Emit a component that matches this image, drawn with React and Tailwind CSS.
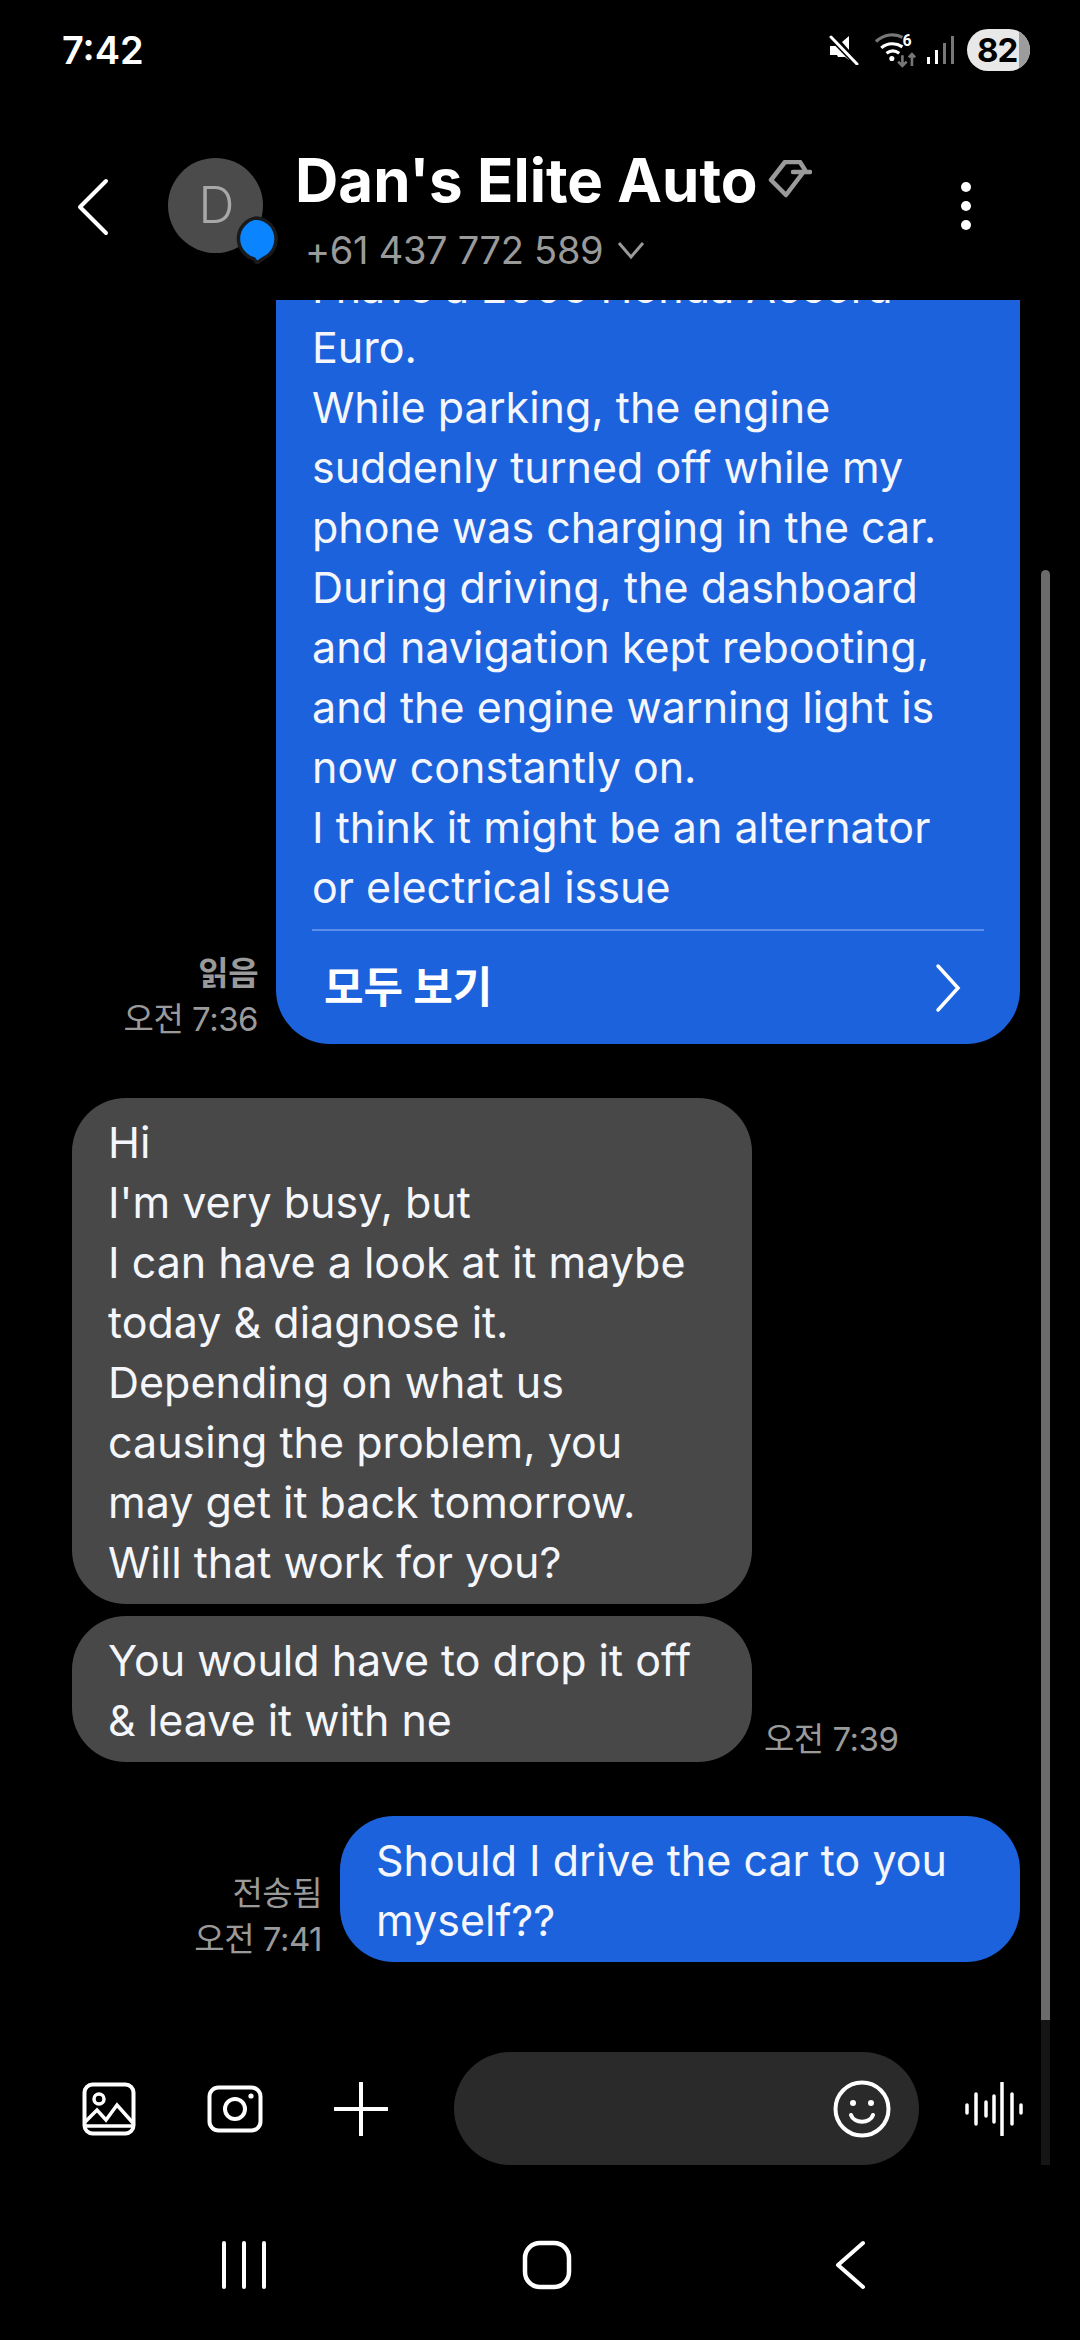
import React from "react";

const FONT = "font-['Inter','Noto_Sans_CJK_KR',sans-serif]";

function Lines({ lines }) {
  return (
    <div className="text-[43px] leading-[60px] text-[#f4f6fb] whitespace-nowrap">
      {lines.map((l) => (
        <div key={l}>{l}</div>
      ))}
    </div>
  );
}

function Meta({ status, time, boldStatus }) {
  return (
    <div className="flex flex-col items-end text-[33px] text-[#9a9a9a] whitespace-nowrap tracking-[-0.5px]">
      {status && <div className={`leading-[46px] ${boldStatus ? "font-bold" : ""}`}>{status}</div>}
      <div className="leading-[46px]">{time}</div>
    </div>
  );
}

function StatusBar() {
  return (
    <div className="h-[100px] flex items-center justify-between pl-[62px] pr-[50px] shrink-0">
      <div className="text-[38px] font-semibold text-white">7:42</div>
      <div className="flex items-center">
        <svg width="30" height="30" viewBox="0 0 30 30" className="mr-[14px]">
          <path d="M1 11h7l3-2 9 13v3l-4-3H9l-1-2H1z" fill="#fff" />
          <path d="M13 7l7-6v14z" fill="#fff" />
          <path d="M2 2l26 27" stroke="#000" strokeWidth="6" />
          <path d="M2 2l26 27" stroke="#fff" strokeWidth="3" strokeLinecap="round" />
        </svg>
        <svg width="44" height="36" viewBox="0 0 40 34" className="mr-[9px]">
          <path d="M2 9C10 2 20 1 27 5" fill="none" stroke="#777" strokeWidth="3" />
          <path d="M7 15c6-5 14-5 20-1" fill="none" stroke="#fff" strokeWidth="3" />
          <path d="M12 20c4-3 8-3 12 0" fill="none" stroke="#fff" strokeWidth="3" />
          <circle cx="17" cy="25" r="2.4" fill="#fff" />
          <path d="M27 22v10m-4-4l4 4 4-4" fill="none" stroke="#777" strokeWidth="2.5" />
          <path d="M36 32V21m-3 3l3-3 3 3" fill="none" stroke="#777" strokeWidth="2.5" />
          <text x="27" y="13" fontSize="15" fontWeight="700" fill="#fff" fontFamily="Roboto">6</text>
        </svg>
        <svg width="30" height="30" viewBox="0 0 30 30" className="mr-[11px]">
          <rect x="1" y="22" width="3" height="7" fill="#fff" />
          <rect x="9" y="15" width="3" height="14" fill="#fff" />
          <rect x="17" y="8" width="3" height="21" fill="#777" />
          <rect x="25" y="1" width="3" height="28" fill="#777" />
        </svg>
        <div className="relative w-[63px] h-[42px] rounded-[21px] overflow-hidden bg-[#e8e8e8] flex items-center pl-[10px]">
          <span className="text-[33px] leading-none font-bold text-black tracking-[-1px]">82</span>
          <div className="absolute top-0 bottom-0 right-0 w-[11px] bg-[#9c9c9c]" />
        </div>
      </div>
    </div>
  );
}

function Header() {
  return (
    <div className="h-[200px] shrink-0 flex items-start relative">
      <svg width="34" height="58" viewBox="0 0 34 58" className="ml-[76px] mt-[78px] shrink-0">
        <path d="M30 3L4 29l26 26" fill="none" stroke="#fff" strokeWidth="4" strokeLinecap="round" strokeLinejoin="round" />
      </svg>
      <div className="relative ml-[58px] mt-[58px] w-[95px] h-[95px] rounded-full bg-[#4b4b4b] flex items-center justify-center shrink-0">
        <span className="text-[50px] font-light text-[#a8a8a8] ml-[2px]">D</span>
        <svg width="46" height="48" viewBox="0 0 46 48" className="absolute left-[65px] top-[58px]">
          <path d="M23 2a21 21 0 0 1 8 40l-7 5-3-4A21 21 0 0 1 23 2z" fill="#0a84ff" stroke="#1a1a1a" strokeWidth="3.5" />
        </svg>
      </div>
      <div className="ml-[32px] mt-[44px] flex flex-col">
        <div className="flex items-center">
          <span className="text-[60px] leading-[72px] font-bold text-white whitespace-nowrap">Dan's Elite Auto</span>
          <svg width="44" height="40" viewBox="0 0 44 40" className="ml-[10px]">
            <path d="M17 2h15l5 8-19 25L3 20z" fill="none" stroke="#9a9a9a" strokeWidth="4.5" strokeLinejoin="round" />
            <path d="M25 12h17" stroke="#9a9a9a" strokeWidth="4.5" strokeLinecap="round" />
          </svg>
        </div>
        <div className="flex items-center ml-[10px] mt-[11px]">
          <span className="text-[38px] leading-[46px] text-[#9a9a9a] whitespace-nowrap tracking-[-0.3px]">+61 437 772 589</span>
          <svg width="28" height="20" viewBox="0 0 28 20" className="ml-[14px]">
            <path d="M2 3l12 14L26 3" fill="none" stroke="#9a9a9a" strokeWidth="3" />
          </svg>
        </div>
      </div>
      <div className="absolute left-[961px] top-[82px] flex flex-col gap-[9px]">
        <div className="w-[10px] h-[10px] rounded-full bg-white" />
        <div className="w-[10px] h-[10px] rounded-full bg-white" />
        <div className="w-[10px] h-[10px] rounded-full bg-white" />
      </div>
    </div>
  );
}

function Messages() {
  return (
    <div className="relative flex-1 min-h-0 overflow-hidden flex flex-col justify-end pb-[58px]">
      <div className="flex justify-end items-end pr-[60px]">
        <div className="mb-[2px] mr-[18px]">
          <Meta status="읽음" time="오전 7:36" boldStatus />
        </div>
        <div className="w-[744px] bg-[#1c62dc] rounded-b-[54px] shrink-0">
          <div className="pl-[36px] pt-[13px]">
            <Lines
              lines={[
                "I have a 2006 Honda Accord",
                "Euro.",
                "While parking, the engine",
                "suddenly turned off while my",
                "phone was charging in the car.",
                "During driving, the dashboard",
                "and navigation kept rebooting,",
                "and the engine warning light is",
                "now constantly on.",
                "I think it might be an alternator",
                "or electrical issue",
              ]}
            />
          </div>
          <div className="mx-[36px] mt-[12px] h-[2px] bg-[#5c8eea]" />
          <div className="h-[113px] flex items-center justify-between pl-[48px] pr-[58px]">
            <span className="text-[43px] font-bold text-white whitespace-nowrap">모두 보기</span>
            <svg width="28" height="50" viewBox="0 0 28 50">
              <path d="M4 3l20 22L4 47" fill="none" stroke="#fff" strokeWidth="3.5" strokeLinecap="round" />
            </svg>
          </div>
        </div>
      </div>

      <div className="mt-[54px] pl-[72px] flex flex-col gap-[12px]">
        <div className="w-[680px] bg-[#484848] rounded-[54px] pl-[36px] pt-[14px] pb-[12px]">
          <Lines
            lines={[
              "Hi",
              "I'm very busy, but",
              "I can have a look at it maybe",
              "today & diagnose it.",
              "Depending on what us",
              "causing the problem, you",
              "may get it back tomorrow.",
              "Will that work for you?",
            ]}
          />
        </div>
        <div className="flex items-end">
          <div className="w-[680px] bg-[#484848] rounded-[54px] pl-[36px] pt-[14px] pb-[12px]">
            <Lines lines={["You would have to drop it off", "& leave it with ne"]} />
          </div>
          <div className="ml-[12px] mb-[0px]">
            <Meta time="오전 7:39" />
          </div>
        </div>
      </div>

      <div className="mt-[54px] flex justify-end items-end pr-[60px]">
        <div className="mb-[0px] mr-[18px]">
          <Meta status="전송됨" time="오전 7:41" />
        </div>
        <div className="w-[680px] bg-[#1c62dc] rounded-[54px] pl-[36px] pt-[14px] pb-[12px] shrink-0">
          <Lines lines={["Should I drive the car to you", "myself??"]} />
        </div>
      </div>

      <div className="absolute left-[1041px] top-[270px] w-[9px] bottom-0 bg-[#6b6b6b] rounded-t-full" />
    </div>
  );
}

function InputBar() {
  return (
    <div className="h-[145px] shrink-0 relative flex items-start pt-[32px]">
      <svg width="54" height="54" viewBox="0 0 54 54" className="ml-[82px] mt-[30px] shrink-0">
        <rect x="2.5" y="2.5" width="49" height="49" rx="8" fill="none" stroke="#fff" strokeWidth="4" />
        <circle cx="17" cy="17" r="5" fill="none" stroke="#fff" strokeWidth="3.5" />
        <path d="M3 40l12-12 9 10 11-15 16 18" fill="none" stroke="#fff" strokeWidth="3.5" />
        <path d="M3 44h48" stroke="#fff" strokeWidth="3.5" />
      </svg>
      <svg width="56" height="48" viewBox="0 0 56 48" className="ml-[71px] mt-[33px] shrink-0">
        <rect x="2.5" y="2.5" width="51" height="43" rx="9" fill="none" stroke="#fff" strokeWidth="4" />
        <circle cx="28" cy="24" r="10" fill="none" stroke="#fff" strokeWidth="4" />
        <circle cx="44" cy="11" r="2.6" fill="#fff" />
      </svg>
      <svg width="54" height="54" viewBox="0 0 54 54" className="ml-[71px] mt-[30px] shrink-0">
        <path d="M27 1v52M1 27h52" stroke="#fff" strokeWidth="4" strokeLinecap="round" />
      </svg>
      <div className="ml-[66px] w-[465px] h-[113px] rounded-[57px] bg-[#2a2a2a] flex items-center justify-end pr-[28px] shrink-0">
        <svg width="58" height="58" viewBox="0 0 58 58">
          <circle cx="29" cy="29" r="26.5" fill="none" stroke="#fff" strokeWidth="4" />
          <circle cx="20" cy="23" r="3" fill="#fff" />
          <circle cx="38" cy="23" r="3" fill="#fff" />
          <path d="M18 35c3 9 19 9 22 0" fill="none" stroke="#fff" strokeWidth="4" strokeLinecap="round" />
        </svg>
      </div>
      <svg width="60" height="54" viewBox="0 0 60 54" className="ml-[45px] mt-[30px] shrink-0">
        <path
          d="M3 23v8M12 12v30M22 20v14M30 14v26M38 1v52M48 12v30M57 23v8"
          stroke="#fff"
          strokeWidth="3.5"
          strokeLinecap="round"
        />
      </svg>
      <div className="absolute left-[1041px] top-0 h-[145px] w-[9px] bg-[#151515]" />
    </div>
  );
}

function NavBar() {
  return (
    <div className="h-[175px] shrink-0 relative flex items-start pt-[76px]">
      <svg width="46" height="48" viewBox="0 0 46 48" className="ml-[221px] shrink-0">
        <path d="M3 2v44M23 2v44M43 2v44" stroke="#fff" strokeWidth="4" strokeLinecap="round" />
      </svg>
      <svg width="50" height="50" viewBox="0 0 50 50" className="ml-[255px] shrink-0 -mt-[1px]">
        <rect x="3" y="3" width="44" height="44" rx="15" fill="none" stroke="#fff" strokeWidth="4.5" />
      </svg>
      <svg width="32" height="50" viewBox="0 0 32 50" className="ml-[262px] shrink-0 -mt-[1px]">
        <path d="M29 3L4 25l25 22" fill="none" stroke="#fff" strokeWidth="4" strokeLinecap="round" strokeLinejoin="round" />
      </svg>
    </div>
  );
}

export default function App() {
  return (
    <div className={`w-[1080px] h-[2340px] bg-black flex flex-col overflow-hidden ${FONT}`}>
      <StatusBar />
      <Header />
      <Messages />
      <InputBar />
      <NavBar />
    </div>
  );
}
